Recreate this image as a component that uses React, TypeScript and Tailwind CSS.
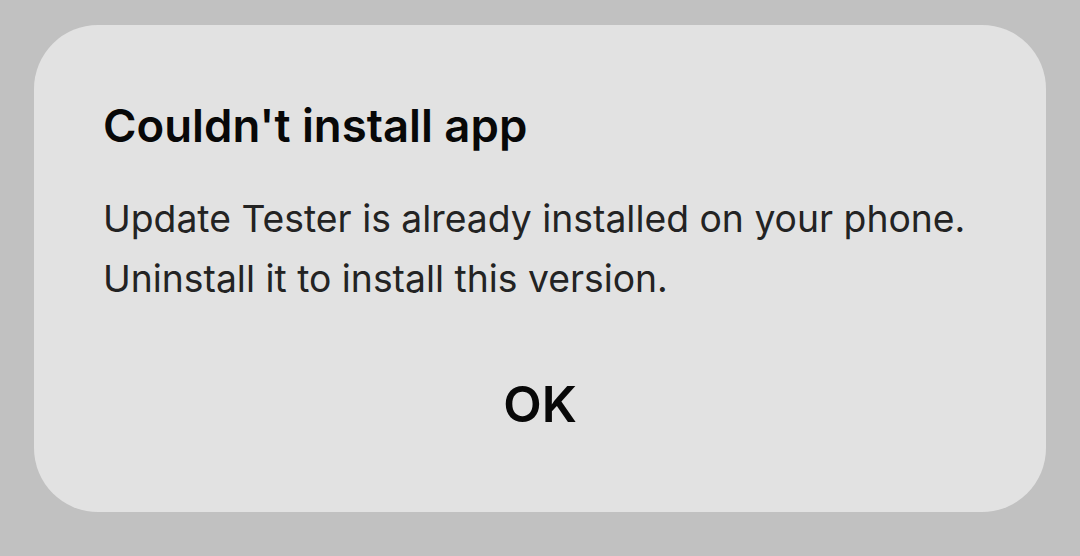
export default function App() {
  return (
    <div className="w-[1080px] h-[556px] bg-[#c1c1c1] pt-[25px] pl-[34px]" style={{ fontFamily: 'Inter, "Noto Sans", sans-serif' }}>
      <div className="w-[1012px] h-[487px] bg-[#e2e2e2] rounded-[64px] flex flex-col px-[69px] pt-[73px]">
        <h1 className="text-[45.5px] leading-[56px] font-semibold text-[#080808]">Couldn't install app</h1>
        <p className="mt-[35px] text-[37.3px] leading-[60px] text-[#232323]">
          Update Tester is already installed on your phone.<br />Uninstall it to install this version.
        </p>
        <div className="mt-[65px] flex justify-center">
          <span className="text-[50px] leading-[60px] font-semibold text-[#080808]">OK</span>
        </div>
      </div>
    </div>
  );
}
